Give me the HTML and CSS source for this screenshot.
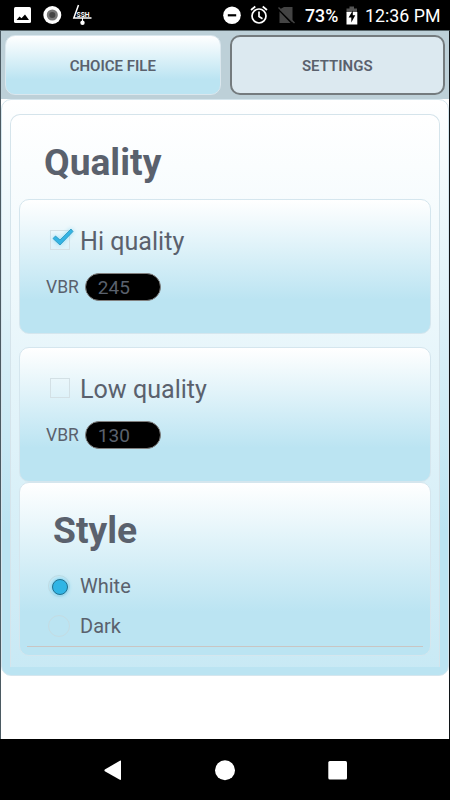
FILE: index.html
```html
<!DOCTYPE html>
<html lang="en">
<head>
	<meta charset="UTF-8">
	<title>Settings</title>
	<link rel="stylesheet" href="styles.css">
</head>
<body>
	<div id="phone">
		<div id="status">
			<svg class="notice" width="80" height="30" viewBox="0 0 80 30">
				<rect x="0" y="7" width="17" height="16" rx="1.500" fill="#fff"/>
				<path d="M2.500 20 L5.500 16.500 L7.500 18.200 L11 14.500 L15 20Z" fill="#000"/>
				<circle cx="38.300" cy="15" r="9" fill="#fff"/>
				<circle cx="38.300" cy="15" r="4.300" fill="#444" stroke="#777" stroke-width="2.500"/>
				<path d="M64.500 5 L59.800 18 H77.500" fill="none" stroke="#fff" stroke-width="1.500"/>
				<path d="M68.500 18v4" stroke="#fff" stroke-width="1"/>
				<circle cx="68.500" cy="22.700" r="2.200" fill="#fff"/>
				<text x="62.500" y="16.800" class="ssh" textLength="13" lengthAdjust="spacingAndGlyphs">SSH</text>
			</svg>
			<svg class="system" width="73" height="30" viewBox="0 0 73 30">
				<circle cx="9" cy="15.300" r="8.800" fill="#fff"/>
				<path d="M4.800 15.300h8.400" stroke="#000" stroke-width="2.200"/>
				<g fill="none" stroke="#fff" stroke-width="1.700">
					<circle cx="36" cy="16" r="7"/>
					<path d="M36 11.500v5l3.500 2.200M28 10l4.300-3.500M44 10l-4.300-3.500"/>
				</g>
				<path d="M61 7h8.500v15.500L56.500 9.500zM56.500 11.500 L67.500 23H56.500z" fill="#444"/>
				<path d="M55.500 7.500L71.500 23" stroke="#444" stroke-width="1.400"/>
			</svg>
			<span class="percent">73%</span>
			<svg class="battery" width="12" height="30" viewBox="0 0 12 30">
				<path d="M3.500 6.500h4.500v2h3v4H.5v-4h3z" fill="#555"/>
				<path d="M.5 12h10.800v12.500H.5z" fill="#fff"/>
				<path d="M6.800 10.500 L2.600 17.500H5.300V22.500L9.300 15.300H6.800z" fill="#000"/>
			</svg>
			<span class="time">12:36 PM</span>
		</div>
		<div id="app">
			<div id="tabs">
				<div class="tab">CHOICE FILE</div>
				<div class="tab active">SETTINGS</div>
			</div>
			<div id="page">
				<div id="quality">
					<h2>Quality</h2>
					<div class="card">
						<div class="check">
							<span class="box">
								<svg width="28" height="26" viewBox="0 0 28 26">
									<path d="M4 12.500 L6.500 10 L11 14 L22 3 L24 5.500 L11 19Z" fill="#35b4e4" stroke="#2794bd" stroke-width=".8"/>
								</svg>
							</span>
							Hi quality
						</div>
						<div class="rate">VBR<span class="value">245</span></div>
					</div>
					<div class="card low">
						<div class="check"><span class="box"></span>Low quality</div>
						<div class="rate">VBR<span class="value">130</span></div>
					</div>
					<div class="card style">
						<h2>Style</h2>
						<div class="radio"><span class="ring on"></span>White</div>
						<div class="radio"><span class="ring"></span>Dark</div>
						<div class="line"></div>
					</div>
				</div>
			</div>
		</div>
		<div id="nav">
			<svg width="450" height="60" viewBox="0 0 450 60">
				<path d="M120.300 20.500 L104.800 29.500 Q104 30.300 104.800 31.200 L120.300 40Q121 40 121 39.300V21Q121 20.300 120.300 20.500Z" fill="#fff"/>
				<circle cx="225" cy="30.200" r="10" fill="#fff"/>
				<rect x="328.300" y="21" width="18.700" height="18.600" rx="1.500" fill="#fff"/>
			</svg>
		</div>
	</div>
</body>
</html>
```
FILE: styles.css
```css
*{margin: 0;padding: 0;box-sizing: border-box;}
body{
	background: #000;
	font-family: Roboto, "Liberation Sans", sans-serif;
	color: #5a616d;
}
#phone{
	width: 450px;
	height: 800px;
	overflow: hidden;
}
#status{
	display: flex;
	height: 30px;
	padding-left: 14px;
	color: #fff;
	font-size: 17.8px;
	line-height: 31px;
	white-space: nowrap;
}
.ssh{
	font: bold 6.5px Roboto, sans-serif;
	fill: #fff;
}
.system{
	margin-left: 129px;
}
.percent{
	width: 41px;
	margin-left: 9px;
	font-weight: 500;
}
.time{
	margin-left: 7px;
}
#app{
	height: 709px;
	background: #fff;
	border-top: 1px solid #59676c;
	border-left: 1px solid #4b5a62;
	border-right: 1px solid #101417;
}
#tabs{
	display: flex;
	gap: 9px;
	height: 68px;
	padding: 4px 4px 4px;
	background: #bdd0d8;
}
.tab{
	width: 216px;
	height: 60px;
	border: 1px solid #dae7ee;
	border-radius: 10px;
	background: linear-gradient(#fff, #bbe4f2 75%);
	font-weight: 600;
	font-size: 15px;
	line-height: 60px;
	text-align: center;
}
.tab.active{
	border: 2px solid #747b7e;
	background: #dce9f0;
	line-height: 58px;
}
#page{
	width: 448px;
	height: 577px;
	padding: 14px 8px 9px;
	border: 1px solid #d5e6ee;
	border-radius: 10px;
	background: linear-gradient(#fff, #bbe4f2 75%);
}
/* the panel is cut off by the end of the scroll area */
#quality{
	height: 553px;
	padding: 0 8px;
	border: 1px solid #d5e4eb;
	border-bottom: none;
	border-radius: 10px 10px 0 0;
	background: linear-gradient(#fff, #bbe4f2 690px);
}
#quality h2{
	height: 84px;
	padding-left: 25px;
	font-size: 37.2px;
	line-height: 95px;
}
.card{
	width: 412px;
	height: 135px;
	padding: 23px 26px 0;
	border: 1px solid #d5e6ee;
	border-radius: 10px;
	background: linear-gradient(#fff, #bbe4f2 75%);
}
.low{
	margin-top: 13px;
}
.check{
	display: flex;
	align-items: center;
	height: 36px;
	padding-left: 4px;
	font-size: 25.1px;
}
.box{
	width: 20px;
	height: 20px;
	margin: -2px 10px 0 0;
	border: 1px solid #d3e0e5;
}
.box svg{
	display: block;
	margin: -5px 0 0 -2px;
	filter: drop-shadow(0 0 2px #8bd9f5);
}
.rate{
	display: flex;
	align-items: center;
	height: 28px;
	margin-top: 14px;
	font-size: 17.5px;
}
.value{
	width: 76px;
	height: 28px;
	margin-left: 6px;
	padding-left: 12px;
	border: 1px solid #81807f;
	border-radius: 14px;
	background: #000;
	font-size: 19px;
	line-height: 27px;
}
#quality .style{
	height: 174px;
	padding: 0 7px;
}
.radio{
	display: flex;
	align-items: center;
	height: 40px;
	padding-left: 21px;
	font-size: 20px;
	line-height: 25px;
}
#quality .style h2{
	height: 83px;
	padding-left: 26px;
	line-height: 94px;
}
.ring{
	width: 22px;
	height: 22px;
	margin-right: 10px;
	border: 1px solid #c4dce3;
	border-radius: 50%;
}
.on::before{
	content: "";
	display: block;
	width: 14px;
	height: 14px;
	margin: 3px;
	border: 1px solid #25708e;
	border-radius: 50%;
	background: #30b5e5;
	box-shadow: 0 0 4px #55c6ee;
}
.line{
	height: 1px;
	background: #c9c5c3;
}
#nav{
	height: 61px;
}
#nav svg{
	display: block;
	margin-top: 1px;
}
```
